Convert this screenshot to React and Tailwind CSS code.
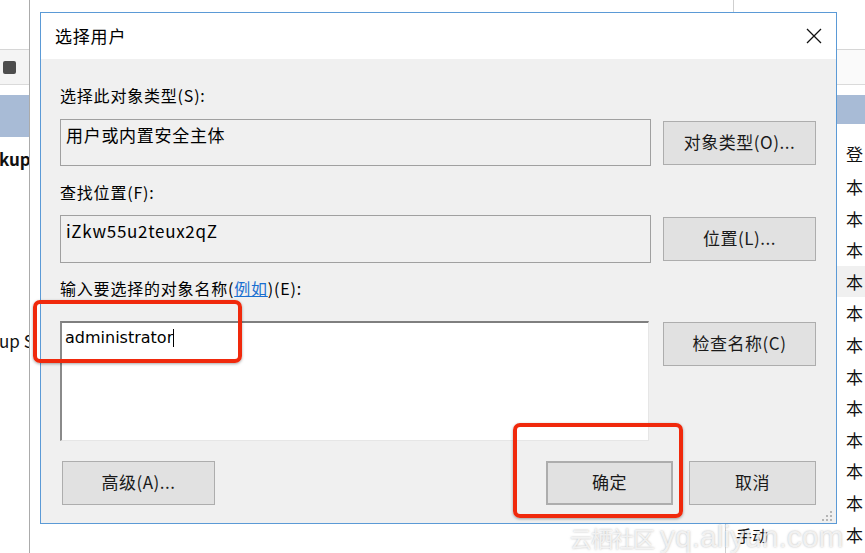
import React from 'react';

const cjk = '"Noto Sans CJK SC", "Noto Sans", sans-serif';

const WinButton = ({ children, className = '' }) => (
  <div
    className={`flex items-center justify-center bg-[#e1e1e1] border border-[#adadad] text-[17px] leading-[20px] pb-[2px] text-[#1a1a1a] ${className}`}
  >
    {children}
  </div>
);

const rows = ['本', '本', '本', '本', '本', '本', '本', '本', '本', '本', '本', '本'];

export default function App() {
  return (
    <div className="relative w-[865px] h-[553px] overflow-hidden bg-white" style={{ fontFamily: cjk }}>
      {/* background window behind the dialog */}
      <div className="flex h-full">
        <div className="w-[30px] shrink-0 overflow-hidden border-r border-[#ababab] flex flex-col">
          <div className="h-[50px] shrink-0 border-b border-[#d6d6d6]" />
          <div className="h-[35px] shrink-0 bg-[#f4f4f4] border-b border-[#dadada] flex items-center pl-[3px]">
            <div className="w-[13px] h-[13px] rounded-[2px] bg-[#4d4d4d]" />
          </div>
          <div className="mt-[10px] h-[42px] shrink-0 bg-[#a8bbd6]" />
          <div className="mt-[13px] h-[20px] leading-[18px] text-[17px] font-bold whitespace-nowrap ml-[-1px] text-[#111]">
            kup
          </div>
          <div className="mt-[162px] h-[20px] leading-[18px] text-[17px] whitespace-nowrap ml-[-1px] text-[#111]">
            up S
          </div>
        </div>

        <div className="flex-1 flex flex-col">
          <div className="h-[12px] flex">
            <div className="w-[704px] border-r border-[#cfcfcf]" />
          </div>
          <div className="flex-1" />
          <div className="h-[30px] flex">
            <div className="w-[696px] border-r border-[#cfcfcf]" />
            <div className="pl-[10px] text-[16px] leading-[24px] text-[#111]">手动</div>
          </div>
        </div>

        <div className="w-[29px] shrink-0 flex flex-col">
          <div className="h-[50px] shrink-0 border-b border-[#d6d6d6]" />
          <div className="h-[35px] shrink-0 bg-[#fafafa] border-b border-[#dadada]" />
          <div className="mt-[10px] h-[29px] shrink-0 bg-[#a8bbd6]" />
          <div className="mt-[16px] h-[31px] leading-[27px] pl-[10px] text-[17px] text-[#111]">登</div>
          {rows.map((r, i) => (
            <div
              key={i}
              className={`h-[31.6px] shrink-0 leading-[31.6px] pl-[10px] text-[17px] text-[#111] ${i === 3 ? 'bg-[#f0f0f0]' : ''}`}
            >
              {r}
            </div>
          ))}
        </div>
      </div>

      {/* dialog */}
      <div className="absolute left-[40px] top-[12px] w-[797px] h-[512px] border border-[#5b9ad6] bg-[#f0f0f0] flex flex-col">
        <div className="h-[46px] bg-white flex items-center justify-between pl-[14px] pr-[14px]">
          <span className="text-[17px] tracking-[0.8px] text-black">选择用户</span>
          <svg width="16" height="16" viewBox="0 0 16 16" className="text-[#111]">
            <path d="M1 1L15 15M15 1L1 15" stroke="currentColor" strokeWidth="1.3" fill="none" />
          </svg>
        </div>

        <div className="flex-1 flex flex-col pl-[19px] pr-[20px] pt-[28px] text-[16px] text-black">
          <div className="h-[20px] leading-[16px] tracking-[0.8px]">选择此对象类型(S):</div>
          <div className="mt-[12px] h-[47px] flex items-center">
            <div className="w-[591px] h-full border border-[#a0a0a0] pl-[5px] pt-[4px] text-[17px] tracking-[0.7px] leading-[22px]">
              用户或内置安全主体
            </div>
            <WinButton className="ml-auto w-[153px] h-[44px] tracking-[0.5px]">对象类型(O)...</WinButton>
          </div>

          <div className="mt-[18px] h-[20px] leading-[16px] tracking-[0.8px]">查找位置(F):</div>
          <div className="mt-[11px] h-[48px] flex items-center">
            <div className="w-[591px] h-full border border-[#a0a0a0] pl-[5px] pt-[4px] text-[17px] tracking-[0.7px] leading-[22px]">
              iZkw55u2teux2qZ
            </div>
            <WinButton className="ml-auto w-[153px] h-[44px] tracking-[0.5px]">位置(L)...</WinButton>
          </div>

          <div className="mt-[17px] h-[20px] leading-[16px] tracking-[0.8px]">
            输入要选择的对象名称(
            <span className="text-[#1a6fd0] underline">例如</span>)(E):
          </div>
          <div className="mt-[21px] h-[120px] flex items-start">
            <div className="w-[589px] h-full bg-white border-t-2 border-l-2 border-r border-b border-t-[#7f7f7f] border-l-[#8a8a8a] border-r-[#e6e6e6] border-b-[#e6e6e6] pl-[3px] pt-[1px]">
              <span
                className="text-[16px] leading-[20px] text-black"
                style={{ fontFamily: '"DejaVu Sans", sans-serif' }}
              >
                administrator
              </span>
              <span className="inline-block w-[1px] h-[18px] bg-black align-[-4px]" />
            </div>
            <WinButton className="ml-auto mt-[1px] w-[153px] h-[44px] tracking-[0.5px]">检查名称(C)</WinButton>
          </div>

          <div className="mt-[20px] h-[44px] flex items-center">
            <WinButton className="ml-[2px] w-[153px] h-[44px] tracking-[0.5px]">高级(A)...</WinButton>
            <WinButton className="ml-auto w-[127px] h-[44px] border-2 border-[#3a80d6] tracking-[0.5px]">确定</WinButton>
            <WinButton className="ml-[16px] w-[127px] h-[44px] tracking-[0.5px]">取消</WinButton>
          </div>

          <div className="flex-1 flex items-end justify-end pb-[2px] mr-[-16px]">
            <svg width="10" height="10" viewBox="0 0 10 10">
              <g fill="#b5b5b5">
                <rect x="8" y="0" width="2" height="2" />
                <rect x="4" y="4" width="2" height="2" />
                <rect x="8" y="4" width="2" height="2" />
                <rect x="0" y="8" width="2" height="2" />
                <rect x="4" y="8" width="2" height="2" />
                <rect x="8" y="8" width="2" height="2" />
              </g>
            </svg>
          </div>
        </div>
      </div>

      {/* red highlight marks */}
      <div className="absolute left-[33px] top-[300px] w-[209px] h-[63px] border-4 border-[#f0290c] rounded-[7px] shadow-[0_1px_3px_rgba(0,0,0,0.35)]" />
      <div className="absolute left-[513px] top-[423px] w-[170px] h-[95px] border-4 border-[#f0290c] rounded-[7px] shadow-[0_1px_3px_rgba(0,0,0,0.35)]" />

      {/* watermark */}
      <div className="absolute left-[570px] top-[514px] flex items-baseline whitespace-nowrap text-white/75 [text-shadow:0_0_2px_rgba(110,110,110,0.5)]">
        <span className="text-[22px] tracking-[-1px]">云栖社区</span>
        <span className="ml-[6px] text-[30px]" style={{ fontFamily: '"Liberation Sans", sans-serif' }}>
          yq.aliyun.com
        </span>
      </div>
    </div>
  );
}
